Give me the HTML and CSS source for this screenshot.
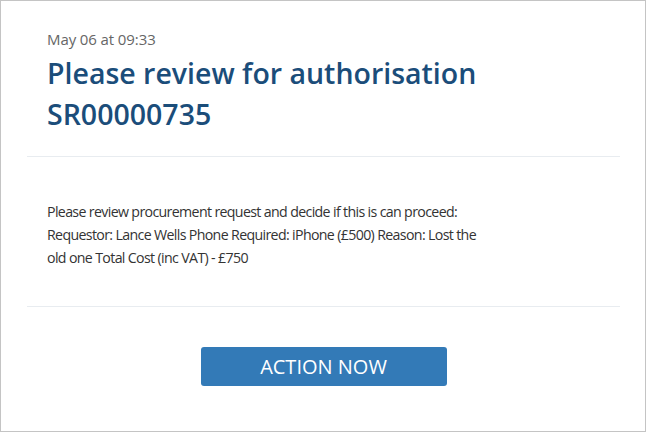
FILE: index.html
```html
<!DOCTYPE html>
<html>
<head>
<meta charset="utf-8">
<link rel="stylesheet" href="styles.css">
</head>
<body>
<div class="card">
  <div class="header">
    <div class="date">May 06 at 09:33</div>
    <h1 class="title">Please review for authorisation SR00000735</h1>
  </div>
  <hr class="sep sep-top">
  <div class="body">
    <p>Please review procurement request and decide if this is can proceed: Requestor: Lance Wells Phone Required: iPhone (£500) Reason: Lost the old one Total Cost (inc VAT) - £750</p>
  </div>
  <hr class="sep sep-bottom">
  <div class="actions">
    <a class="btn" href="#">ACTION NOW</a>
  </div>
</div>
</body>
</html>
```

FILE: styles.css
```css
html, body {
  margin: 0;
  padding: 0;
  background: #fff;
}
.card {
  box-sizing: border-box;
  width: 646px;
  height: 432px;
  border: 1px solid #c4c4c4;
  padding: 0 25px 0 26px;
  font-family: "Open Sans", "Noto Sans", sans-serif;
}
.header {
  padding: 27px 20px 0 20px;
}
.date {
  font-size: 15px;
  line-height: 22px;
  color: #666;
  letter-spacing: -0.1px;
}
.title {
  margin: 3px 0 0 0;
  max-width: 450px;
  font-size: 28.5px;
  font-weight: 600;
  line-height: 41px;
  color: #1b4d7a;
}
.sep {
  border: 0;
  border-top: 1px solid #e8ecf0;
  margin: 0;
}
.sep-top {
  margin-top: 21px;
}
.body {
  padding: 43px 20px 0 20px;
}
.body p {
  margin: 0;
  max-width: 450px;
  font-size: 14.2px;
  line-height: 23px;
  color: #333;
  letter-spacing: -0.65px;
}
.sep-bottom {
  margin-top: 37px;
}
.actions {
  display: flex;
  justify-content: center;
  padding-top: 40px;
}
.btn {
  display: block;
  width: 246px;
  height: 39px;
  line-height: 39px;
  text-align: center;
  background: #337ab7;
  color: #fff;
  font-size: 20px;
  text-decoration: none;
  border-radius: 3px;
}
```
